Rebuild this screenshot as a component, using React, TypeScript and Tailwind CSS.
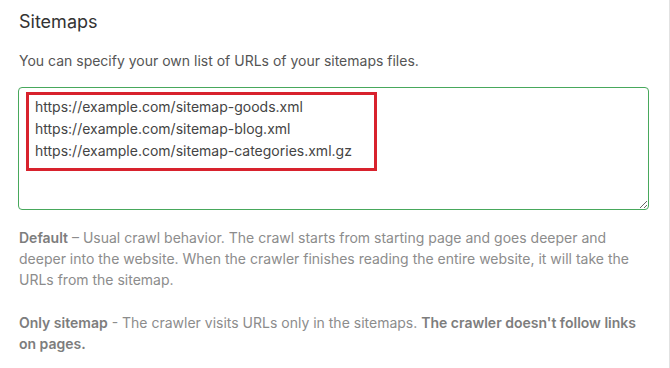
import { useState } from 'react';

const urls = [
  'https://example.com/sitemap-goods.xml',
  'https://example.com/sitemap-blog.xml',
  'https://example.com/sitemap-categories.xml.gz',
].join('\n');

export default function App() {
  const [value, setValue] = useState(urls);

  return (
    <div className="w-[670px] h-[368px] bg-white border-r border-[#e2e2e2] font-['Inter',sans-serif] overflow-hidden">
      <div className="pl-[19px] pr-[22px] pt-[9px]">
        <h2 className="text-[18px] leading-[26px] text-[#333] font-normal">Sitemaps</h2>
        <p className="mt-[16px] text-[14px] leading-[20px] text-[#555]">
          You can specify your own list of URLs of your sitemaps files.
        </p>

        <div className="relative mt-[16px] -ml-px">
          <textarea
            value={value}
            onChange={e => setValue(e.target.value)}
            className="block w-[631px] h-[123px] rounded-[4px] border border-[#47a85c] pl-[16px] pt-[8px] text-[14px] leading-[22px] text-[#444] outline-none resize-y"
          />
          {/* выделение списка */}
          <div className="absolute left-[8px] top-[5px] w-[351px] h-[79px] border-[3px] border-[#d8222d] pointer-events-none" />
        </div>

        <div className="mt-[17px] text-[14px] leading-[21px] text-[#8c8c8c]">
          <p>
            <b className="font-semibold text-[#7d7d7d]">Default</b> – Usual crawl behavior. The crawl starts from starting page and goes deeper and deeper into the website. When the crawler finishes reading the entire website, it will take the URLs from the sitemap.
          </p>
          <p className="mt-[22px]">
            <b className="font-semibold text-[#7d7d7d]">Only sitemap</b> - The crawler visits URLs only in the sitemaps.{' '}
            <b className="font-semibold text-[#7d7d7d]">The crawler doesn't follow links on pages.</b>
          </p>
        </div>
      </div>
    </div>
  );
}
